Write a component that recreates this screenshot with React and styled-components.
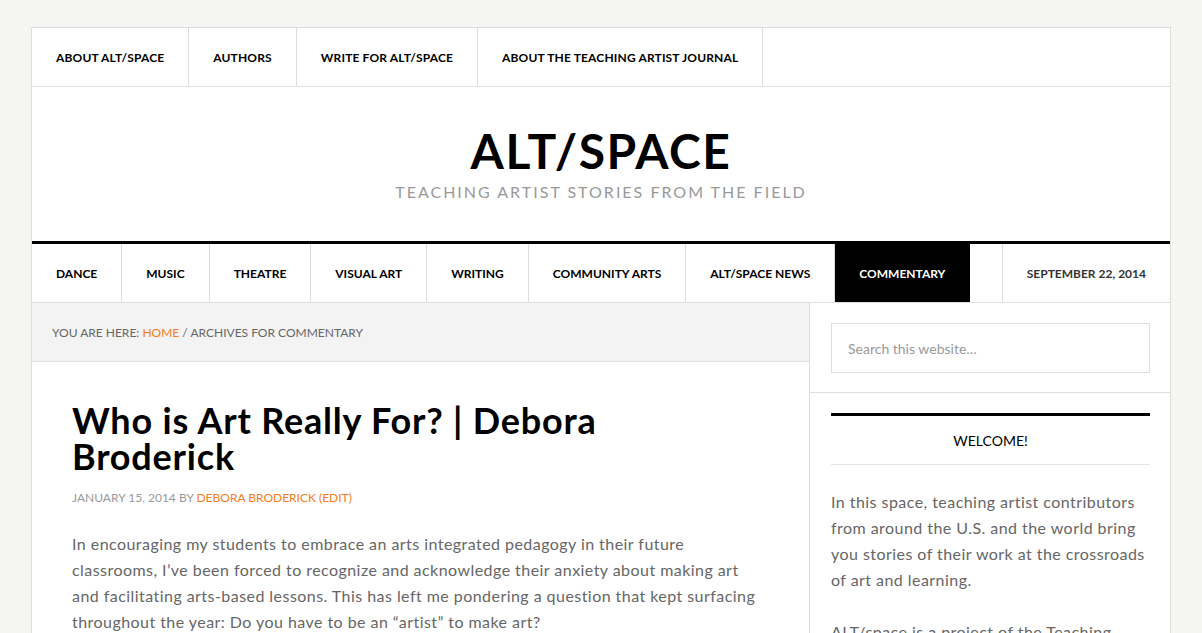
import React from 'react'
import styled, { createGlobalStyle } from 'styled-components'

const GlobalStyle = createGlobalStyle`
	body {
		margin: 0;
		background: #f5f5f2;
		font-family: Lato, "Open Sans", sans-serif;
		color: #333;
	}
`

const Site = styled.div`
	width: 1140px;
	margin: 27px auto 0;
	background: #fff;
	border: 1px solid #ddd;
	border-bottom: none;
	box-sizing: border-box;
`

const Menu = styled.nav`
	display: flex;
	height: ${p => p.$h || 58}px;
	border-bottom: 1px solid #ddd;
	${p => p.$top && 'border-top: 3px solid #000;'}
`

const MenuItem = styled.a`
	display: flex;
	align-items: center;
	padding: 0 ${p => p.$pad || 24}px;
	font-size: 12px;
	font-weight: 700;
	letter-spacing: ${p => p.$ls || 0}px;
	color: ${p => (p.$active ? '#fff' : '#000')};
	background: ${p => (p.$active ? '#000' : 'transparent')};
	border-right: 1px solid ${p => (p.$active ? '#000' : '#ddd')};
	text-decoration: none;
	white-space: nowrap;
`

const DateItem = styled.div`
	margin-left: auto;
	display: flex;
	align-items: center;
	padding: 0 24px;
	font-size: 12px;
	font-weight: 700;
	border-left: 1px solid #ddd;
`

const Header = styled.header`
	height: 154px;
	display: flex;
	flex-direction: column;
	align-items: center;
	justify-content: center;
	box-sizing: border-box;
`

const Title = styled.h1`
	margin: 0;
	font-size: 48px;
	font-weight: 700;
	line-height: 1;
	letter-spacing: 1.5px;
	color: #000;
`

const Tagline = styled.p`
	margin: 7px 0 0;
	font-size: 16px;
	letter-spacing: 2px;
	color: #999;
`

const Content = styled.div`
	display: flex;
`

const Main = styled.main`
	width: 777px;
	border-right: 1px solid #ddd;
`

const Crumbs = styled.div`
	background: #f3f3f3;
	border-bottom: 1px solid #e3e3e3;
	height: 58px;
	display: flex;
	align-items: center;
	padding: 0 20px;
	font-size: 12px;
	color: #666;
	span { color: #f27d1c; }
`

const Entry = styled.article`
	padding: 40px 40px 0;
`

const EntryTitle = styled.h2`
	margin: 0;
	font-size: 36px;
	line-height: 36px;
	font-weight: 700;
	letter-spacing: 0.8px;
	color: #000;
	width: 560px;
`

const Meta = styled.p`
	margin: 16px 0 0;
	font-size: 12px;
	color: #999;
	span { color: #f27d1c; }
`

const Para = styled.p`
	margin: 26px 0 0;
	font-size: 16px;
	line-height: 26px;
	letter-spacing: 0.45px;
	color: #666;
	width: 690px;
`

const Sidebar = styled.aside`
	flex: 1;
`

const SearchBox = styled.div`
	padding: 20px 20px 19px 21px;
	border-bottom: 1px solid #ddd;
`

const Input = styled.input`
	width: 100%;
	height: 50px;
	box-sizing: border-box;
	border: 1px solid #ddd;
	padding: 0 16px;
	font-family: inherit;
	font-size: 14px;
	color: #999;
	&::placeholder { color: #999; }
`

const Widget = styled.section`
	padding: 20px 20px 0 21px;
`

const WidgetTitle = styled.h4`
	margin: 0;
	border-top: 3px solid #000;
	border-bottom: 1px solid #e3e3e3;
	height: 52px;
	display: flex;
	align-items: center;
	justify-content: center;
	box-sizing: border-box;
	font-size: 14px;
	font-weight: 400;
	color: #000;
`

const WidgetText = styled.p`
	margin: ${p => p.$mt || 24}px 0 0;
	font-size: 16px;
	line-height: 26px;
	letter-spacing: 0.45px;
	color: #666;
`

const topLinks = ['ABOUT ALT/SPACE', 'AUTHORS', 'WRITE FOR ALT/SPACE', 'ABOUT THE TEACHING ARTIST JOURNAL']
const catLinks = ['DANCE', 'MUSIC', 'THEATRE', 'VISUAL ART', 'WRITING', 'COMMUNITY ARTS', 'ALT/SPACE NEWS', 'COMMENTARY']

const App = () => (
	<>
		<GlobalStyle />
		<Site>
			<Menu>
				{topLinks.map(l => <MenuItem key={l} $ls={0.15}>{l}</MenuItem>)}
			</Menu>
			<Header>
				<Title>ALT/SPACE</Title>
				<Tagline>TEACHING ARTIST STORIES FROM THE FIELD</Tagline>
			</Header>
			<Menu $top>
				{catLinks.map(l => (
					<MenuItem key={l} $active={l === 'COMMENTARY'}>{l}</MenuItem>
				))}
				<DateItem>SEPTEMBER 22, 2014</DateItem>
			</Menu>
			<Content>
				<Main>
					<Crumbs>YOU ARE HERE:&nbsp;<span>HOME</span>&nbsp;/ ARCHIVES FOR COMMENTARY</Crumbs>
					<Entry>
						<EntryTitle>Who is Art Really For? | Debora Broderick</EntryTitle>
						<Meta>JANUARY 15, 2014 BY <span>DEBORA BRODERICK (EDIT)</span></Meta>
						<Para>
							In encouraging my students to embrace an arts integrated pedagogy in their future classrooms, I’ve been forced to recognize and acknowledge their anxiety about making art and facilitating arts-based lessons. This has left me pondering a question that kept surfacing throughout the year: Do you have to be an “artist” to make art?
						</Para>
					</Entry>
				</Main>
				<Sidebar>
					<SearchBox>
						<Input placeholder="Search this website…" />
					</SearchBox>
					<Widget>
						<WidgetTitle>WELCOME!</WidgetTitle>
						<WidgetText>
							In this space, teaching artist contributors from around the U.S. and the world bring you stories of their work at the crossroads of art and learning.
						</WidgetText>
						<WidgetText $mt={26}>ALT/space is a project of the Teaching Artist Journal.</WidgetText>
					</Widget>
				</Sidebar>
			</Content>
		</Site>
	</>
)

export default App
